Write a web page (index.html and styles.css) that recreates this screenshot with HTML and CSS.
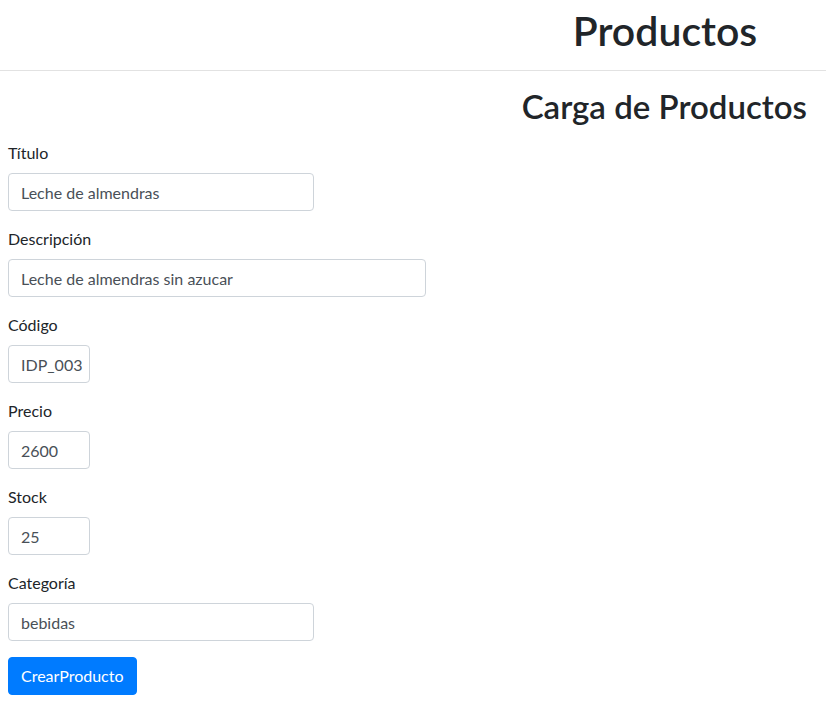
FILE: index.html
```html
<!DOCTYPE html>
<html lang="es">
<head>
<meta charset="utf-8">
<title>Productos</title>
<link rel="stylesheet" href="styles.css">
</head>
<body>
<header class="page-header">
  <h1 class="page-title">Productos</h1>
</header>
<main class="content">
  <h2 class="section-title">Carga de Productos</h2>
  <form class="product-form">
    <div class="form-group">
      <label class="form-label">Título</label>
      <input class="form-control w-lg" type="text" value="Leche de almendras">
    </div>
    <div class="form-group">
      <label class="form-label">Descripción</label>
      <input class="form-control w-xl" type="text" value="Leche de almendras sin azucar">
    </div>
    <div class="form-group">
      <label class="form-label">Código</label>
      <input class="form-control w-sm" type="text" value="IDP_003">
    </div>
    <div class="form-group">
      <label class="form-label">Precio</label>
      <input class="form-control w-sm" type="text" value="2600">
    </div>
    <div class="form-group">
      <label class="form-label">Stock</label>
      <input class="form-control w-sm" type="text" value="25">
    </div>
    <div class="form-group">
      <label class="form-label">Categoría</label>
      <input class="form-control w-lg" type="text" value="bebidas">
    </div>
    <button class="btn-primary" type="button">CrearProducto</button>
  </form>
</main>
</body>
</html>
```
FILE: styles.css
```css
* { box-sizing: border-box; }
html, body {
  margin: 0;
  padding: 0;
  background: #fff;
}
body {
  font-family: "Segoe UI", Lato, "Noto Sans", sans-serif;
  font-size: 16px;
  line-height: 24px;
  color: #212529;
}
.page-header {
  padding: 7px 0 15px 504px;
  border-bottom: 1px solid #e2e2e2;
}
.page-title {
  margin: 0;
  text-align: center;
  font-size: 41px;
  line-height: 48px;
  font-weight: 600;
}
.content {
  padding: 16px 19px 0 8px;
}
.section-title {
  margin: 0 0 16px;
  text-align: right;
  font-size: 33px;
  line-height: 38px;
  font-weight: 600;
}
.product-form {
  display: flex;
  flex-direction: column;
  align-items: flex-start;
}
.form-group {
  display: flex;
  flex-direction: column;
  align-items: flex-start;
  margin-bottom: 16px;
}
.form-label {
  margin-bottom: 8px;
  line-height: 24px;
}
.form-control {
  height: 38px;
  padding: 6px 12px;
  font-family: inherit;
  font-size: 16px;
  line-height: 24px;
  color: #495057;
  background: #fff;
  border: 1px solid #ced4da;
  border-radius: 4px;
}
.w-lg { width: 306px; }
.w-xl { width: 418px; }
.w-sm { width: 82px; padding-right: 4px; }
.btn-primary {
  height: 38px;
  padding: 6px 12px;
  font-family: inherit;
  font-size: 16px;
  line-height: 24px;
  color: #fff;
  background: #007bff;
  border: 1px solid #007bff;
  border-radius: 4px;
}
```
